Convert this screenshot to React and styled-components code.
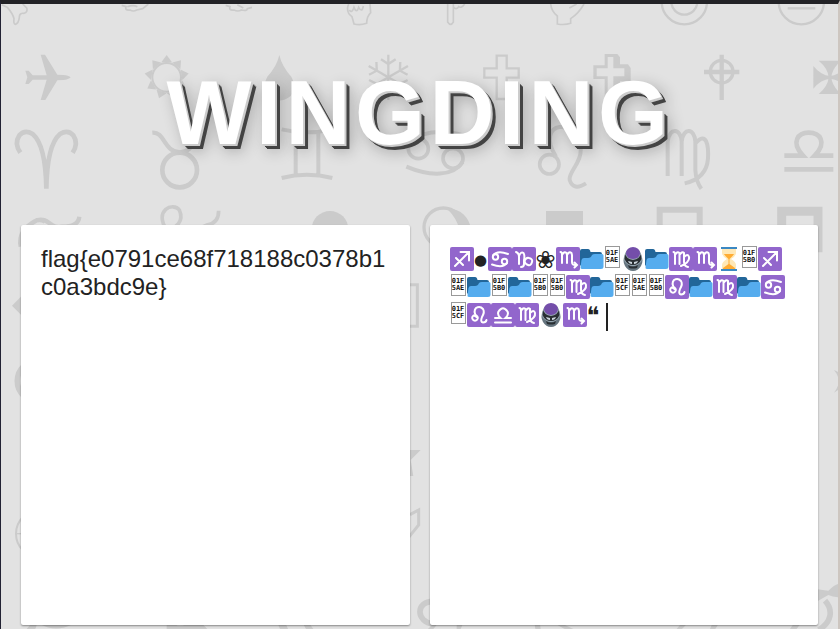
import React from "react";
import styled, { createGlobalStyle } from "styled-components";

const GlobalStyle = createGlobalStyle`
  * { box-sizing: border-box; }
  body { margin: 0; font-family: "Liberation Sans", Arial, sans-serif; color: #222; background: #e2e2e2; }
`;

const Page = styled.div`
  position: relative;
  z-index: 0;
  min-height: 100vh;
  overflow: hidden;
  border-top: 4px solid #222226;
  border-left: 1px solid #222233;
  border-right: 2px solid #cdc6c0;
`;

const Backdrop = styled.svg`
  position: absolute;
  top: -4px;
  left: -1px;
  z-index: -1;
  pointer-events: none;
  fill: #cbcbcb;
`;

const Header = styled.header`
  padding: 57px 20px 60px;
  text-align: center;
`;

const Title = styled.h1`
  margin: 0;
  color: #fff;
  font-size: 90px;
  line-height: 104px;
  letter-spacing: 0.05em;
  text-shadow: 1px 1px #ccc, 2px 2px #ccc, 3px 3px #444, 4px 4px #444,
    5px 5px #444, 6px 6px 16px rgba(0, 0, 0, 0.3);
`;

const Panels = styled.main`
  display: grid;
  grid-template-columns: 1fr 1fr;
  gap: 20px;
  padding: 0 20px;
`;

const Source = styled.textarea`
  display: block;
  width: 100%;
  height: 400px;
  padding: 20px;
  border: 0;
  border-radius: 2px;
  outline: none;
  resize: none;
  overflow: hidden;
  background: #fff;
  box-shadow: 0 1px 2px rgba(0, 0, 0, 0.4);
  color: #222;
  font: 24px/28px "Liberation Sans", Arial, sans-serif;
`;

const Symbols = styled.div`
  display: flex;
  flex-wrap: wrap;
  align-content: flex-start;
  min-width: 0;
  height: 400px;
  padding: 20px;
  border-radius: 2px;
  outline: none;
  background: #fff;
  box-shadow: 0 1px 2px rgba(0, 0, 0, 0.4);
  caret-color: transparent;
  font: 24px/28px "DejaVu Sans", sans-serif;
`;

const Emoji = styled.svg`
  display: block;
  width: 24px;
  height: 28px;
`;

const Glyph = styled.span`
  width: ${(p) => p.$width}px;
  height: 28px;
  font-size: ${(p) => p.$size}px;
  line-height: 30px;
  text-align: center;
`;

const CodeBox = styled.span`
  display: flex;
  flex-direction: column;
  justify-content: center;
  width: 15px;
  height: 22px;
  margin: 1px 1px 5px;
  border: 1px solid #999;
  font: bold 7px/7px "DejaVu Sans Mono", monospace;
  text-align: center;
  color: #111;
`;

const Caret = styled.span`
  width: 2px;
  height: 28px;
  margin: 2px 0 0 6px;
  background: #222;
`;

const signs = {
  sagittarius: <path d="M5 19L19 5M10.500 5H19V13.500M6 11L13 18" />,
  cancer: (
    <>
      <circle cx="7.500" cy="10" r="2.700" />
      <circle cx="16.500" cy="14.500" r="2.700" />
      <path d="M5 8.500Q9 3 20 7M19 16Q15 21.500 4 17.500" />
    </>
  ),
  capricorn: (
    <path d="M4 5Q7 6 7 10V17M7 9Q9 4 11.500 6Q13 8 12 14V17Q12 20 9 20M12 15Q14 10 17 11Q21 12 20 15Q19 19 16 18Q13 17 12 13" />
  ),
  scorpio: (
    <path d="M4.500 5Q6 5 6 8V16M6 8Q8 4 10.500 6L11 8V16M11 8Q13 4 15.500 6L16 8V15Q16 18.500 20 18M18.500 15.500L21 18L18.500 20.500" />
  ),
  virgo: (
    <path d="M4.500 5Q6 5 6 8V17M6 8Q8 4 10.500 6V17M10.500 8Q13 4 15 6V15Q15 19 19 20M15 10Q19 6 20 10Q21 15 12 19" />
  ),
  leo: (
    <path d="M9.500 12.500A2.800 2.800 0 1 1 6.500 12.500Q9 13 9.500 14M9.500 14Q6 8 9 5Q13 2.500 16 6Q18 9 15 14Q13 19 16 19.500Q19 19.500 19.500 17" />
  ),
  libra: (
    <path d="M4 19.500H20M4 15H9.500Q6 12 7.500 8.500Q12 2 16.500 8.500Q18 12 14.500 15H20" />
  ),
};

function Sign({ name }) {
  return (
    <Emoji viewBox="0 0 24 28" role="img" aria-label={name}>
      <rect y="2" width="24" height="24" rx="2" fill="#9266cc" />
      <g
        transform="translate(0 2)"
        fill="none"
        stroke="#fff"
        strokeWidth="2"
        strokeLinecap="round"
      >
        {signs[name]}
      </g>
    </Emoji>
  );
}

function Folder() {
  return (
    <Emoji viewBox="0 0 24 28" role="img" aria-label="folder">
      <path
        d="M0 20V6Q0 4 2 4H8Q10 4 10.500 7H20Q22 7 22 9V22H2Z"
        fill="#226699"
      />
      <path
        d="M23.500 10.500V22Q23.500 24 21 24H2Q0 24 .500 22L1.500 15Q2 13 4 13H8Q11 13 12 10Q13 9 15 9H22Q23.500 9 23.500 10.500Z"
        fill="#55acee"
      />
    </Emoji>
  );
}

function Trackball() {
  return (
    <Emoji viewBox="0 0 24 28" role="img" aria-label="trackball">
      <path d="M12 3Q18 3 20 9Q23 16 20 21Q17 26 12 26Q7 26 4 21Q1 16 4 9Q6 3 12 3Z" fill="#66757f" />
      <path d="M5 7Q2 14 4 17Q8 21 12 21Q16 21 20 17Q22 14 19 7Z" fill="#99aab5" />
      <path d="M4.500 9Q5 14 12 15Q19 14 19.500 9L20.500 14Q18 20 12 20Q6 20 3.500 14Z" fill="#292f33" />
      <path d="M7 20Q12 23 17 20L16 23Q12 24 8 23Z" fill="#292f33" />
      <path d="M7 16L11 17V19Q8 19 7 16ZM17 16L13 17V19Q16 19 17 16Z" fill="#ccd6dd" />
      <ellipse cx="12" cy="8" rx="7" ry="6" fill="#744eaa" />
    </Emoji>
  );
}

function Hourglass() {
  return (
    <Emoji viewBox="0 0 24 28" role="img" aria-label="hourglass">
      <path
        d="M5 4H19V8Q19 11 14 14Q19 17 19 20V24H5V20Q5 17 10 14Q5 11 5 8Z"
        fill="#ffe8b6"
      />
      <path d="M7 9H17Q16 11 12.500 14V19L18 23V24H6V23L11.500 19V14Q8 11 7 9Z" fill="#ffac33" />
      <path d="M4 2H20V4H4ZM4 24H20V26H4Z" fill="#3b88c3" />
    </Emoji>
  );
}

function Code({ tail }) {
  return (
    <CodeBox>
      <span>01F</span>
      <span>{tail}</span>
    </CodeBox>
  );
}

const cipher = {
  f: <Sign name="sagittarius" />,
  l: <Glyph $width={14} $size={15}>●</Glyph>,
  a: <Sign name="cancer" />,
  g: <Sign name="capricorn" />,
  "{": <Glyph $width={20} $size={24}>❀</Glyph>,
  e: <Sign name="scorpio" />,
  0: <Folder />,
  1: <Folder />,
  3: <Code tail="5CF" />,
  6: <Hourglass />,
  7: <Code tail="5AE" />,
  8: <Code tail="5B0" />,
  9: <Trackball />,
  b: <Sign name="leo" />,
  c: <Sign name="virgo" />,
  d: <Sign name="libra" />,
  "}": <Glyph $width={13} $size={24}>❝</Glyph>,
};

const plain = "flag{e0791ce68f718188c0378b1c0a3bdc9e}";

function Line({ width = 12, ...rest }) {
  return <path fill="none" stroke="#cbcbcb" strokeWidth={width} {...rest} />;
}

function Ring({ width = 12, ...rest }) {
  return <circle fill="none" stroke="#cbcbcb" strokeWidth={width} {...rest} />;
}

const rays = [0, 1, 2, 3, 4, 5, 6, 7, 8];
const arms = [0, 60, 120, 180, 240, 300];
const quarters = [0, 90, 180, 270];

function Pattern() {
  return (
    <Backdrop width="840" height="629" viewBox="0 0 2520 1887" aria-hidden="true">
      <Line width={5} d="M5 14L22 22Q38 40 42 56Q40 73 46 73Q56 70 58 52Q58 38 72 40Q84 36 80 24L68 12" />
      <Line width={5} d="M365 16L378 20Q374 32 390 30Q400 36 410 30L428 26L445 12M382 20Q400 14 412 20" />
      <Line width={5} d="M677 16L690 20Q686 32 702 30Q714 36 724 30Q742 34 742 26L756 22M712 14L730 24" />
      <Line width={5} d="M1046 12Q1036 36 1056 50L1062 72Q1080 77 1100 70Q1100 50 1112 38L1110 12M1048 30Q1056 42 1062 22Q1070 42 1076 22Q1086 40 1090 18" />
      <Line width={5} d="M1343 12V66Q1352 80 1360 66V12M1360 20Q1368 32 1376 20Q1384 26 1394 12" />
      <Line width={5} d="M1652 12Q1654 34 1672 48V72Q1694 76 1712 70V56Q1736 40 1752 12M1708 24L1730 12" />
      <Ring width={7} cx="2053" cy="5" r="68" />
      <Ring width={7} cx="2053" cy="5" r="39" />
      <Ring width={7} cx="2404" cy="5" r="68" />
      <Line width={7} d="M2363 25H2446" />

      <path d="M76 212H86L98 226H140L122 164H135L172 224L190 225Q206 226 212 232Q206 239 190 240L172 241L136 300H122L140 239H98L86 252H76L82 232Z" />
      <Ring width={6} cx="500" cy="232" r="43" />
      {rays.map((i) => (
        <path key={i} d="M484 187L500 165L516 187Z" transform={`rotate(${i * 40} 500 232)`} />
      ))}
      <path d="M838 165Q846 200 874 230Q892 262 872 288Q838 315 804 288Q784 262 802 230Q830 200 838 165Z" />
      {arms.map((a) => (
        <Line key={a} width={7} d="M1165 232V164M1143 178L1165 192L1187 178" transform={`rotate(${a} 1165 232)`} />
      ))}
      <Line width={7} d="M1490 167H1520V205H1556V233H1520V297H1490V233H1453V205H1490Z" />
      <path d="M1814 162H1852L1860 172V193H1884L1892 204V244H1860V300H1822L1814 290V237H1780V196H1814ZM1823 171V205H1790V229H1823V288H1840V229H1873V205H1840V171Z" fillRule="evenodd" />
      <Ring width={10} cx="2165" cy="215" r="34" />
      <Line width={13} d="M2165 164V300M2112 216H2218" />
      {quarters.map((a) => (
        <path key={a} d="M2456 182H2524Q2496 205 2494 232H2486Q2484 205 2456 182Z" transform={`rotate(${a} 2490 232)`} />
      ))}

      <Line width={14} d="M61 458Q42 430 58 406Q74 388 98 402Q137 435 139 566Q141 435 180 402Q204 388 220 406Q236 430 218 458" />
      <Ring width={14} cx="539" cy="510" r="52" />
      <Line width={13} d="M457 398C495 395 490 455 540 457C588 455 583 395 620 398" />
      <Line d="M845 388Q920 406 997 388M887 395V525M955 395V525M845 534Q920 514 997 534" />
      <Ring width={11} cx="1255" cy="446" r="30" />
      <Ring width={11} cx="1359" cy="475" r="30" />
      <Line d="M1226 424Q1290 380 1390 406M1388 486C1360 530 1290 530 1219 500" />
      <Ring width={11} cx="1648" cy="493" r="29" />
      <Line d="M1668 470C1600 360 1740 350 1742 450C1744 490 1705 515 1709 540Q1720 574 1758 550" />
      <Line d="M2003 528V425C2008 380 2043 385 2045 425V528M2045 425C2050 380 2084 385 2086 425V510Q2088 545 2104 566M2086 430C2120 390 2126 440 2124 475Q2120 535 2054 550" />
      <Line width={14} d="M2353 467H2409C2370 425 2396 398 2426 398C2458 398 2484 425 2444 467H2500M2353 508H2500" />

      <Line width={13} d="M62 740Q52 690 112 660C150 652 150 690 188 680Q235 680 238 650M85 680Q110 650 135 665" />
      <Line width={11} d="M500 690C460 630 520 605 538 630C560 680 500 690 480 710M550 684Q590 692 620 675Q656 670 656 632" />
      <circle cx="990" cy="688" r="55" />
      <Ring width={10} cx="1330" cy="682" r="58" />
      <path d="M1340 625C1425 625 1440 740 1360 748Q1405 690 1340 625Z" />
      <path d="M1638 633H1749V750H1638Z" />
      <Line width={18} d="M1979 629H2099V750H1979Z" />
      <Line width={27} d="M2345 634H2454V743H2345Z" />

      <path d="M36 917L100 853V981Z" />
      <Line width={9} d="M1150 854H1252V979H1150Z" />
      <Ring width={17} cx="112" cy="1143" r="60" />
      <path d="M2502 1110Q2530 1120 2530 1144Q2530 1162 2502 1178Q2530 1144 2502 1110Z" />
      <path d="M1225 1350L1262 1350L1232 1380L1240 1428H1225Z" />
      <Line width={9} d="M1230 1544L1256 1530V1575L1226 1612" />
      <Ring width={6} cx="119" cy="1601" r="71" />
      <Line width={4} d="M50 1601H70" />
      <Line width={17} d="M1300 1804C1245 1805 1248 1866 1300 1872" />
      <path d="M2452 1768L2485 1772Q2510 1748 2520 1752V1792Q2500 1792 2485 1785L2452 1804Z" />
      <Line width={17} d="M2475 1802C2500 1830 2496 1866 2456 1890" />
      <path d="M80 1887L95 1870H112L106 1887ZM120 1873H218Q168 1898 120 1873ZM500 1873H526Q535 1882 560 1873H608L622 1887H500ZM834 1873H858L864 1887H840ZM910 1873H930L940 1887H918ZM1284 1887L1298 1873H1312L1300 1887ZM1370 1873H1388L1382 1887H1370ZM1604 1873H1620L1622 1887H1606ZM1668 1873H1690L1720 1887H1694ZM2030 1887L2042 1873H2060L2046 1887ZM2130 1887L2136 1873H2155L2146 1887ZM2370 1887L2380 1873H2400L2390 1887Z" />
    </Backdrop>
  );
}

export default function App() {
  return (
    <Page>
      <GlobalStyle />
      <Pattern />
      <Header>
        <Title>WINGDING</Title>
      </Header>
      <Panels>
        <Source aria-label="Plain text" spellCheck={false} defaultValue={plain} />
        <Symbols
          role="textbox"
          aria-label="Wingding text"
          aria-multiline="true"
          contentEditable
          suppressContentEditableWarning
        >
          {plain.split("").map((letter, i) => (
            <React.Fragment key={i}>{cipher[letter]}</React.Fragment>
          ))}
          <Caret />
        </Symbols>
      </Panels>
    </Page>
  );
}
